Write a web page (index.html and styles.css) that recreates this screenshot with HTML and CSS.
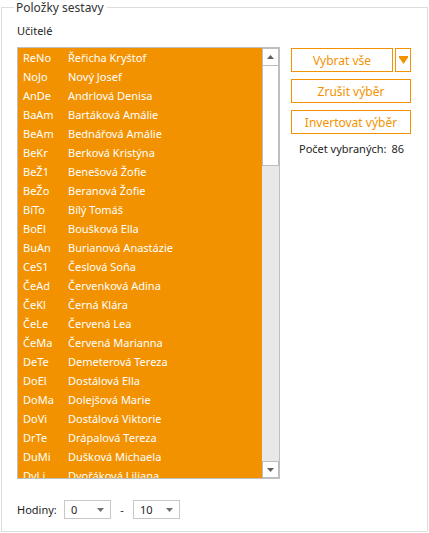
FILE: index.html
```html
<!DOCTYPE html>
<html lang="cs">
<head>
<meta charset="utf-8">
<title>Položky sestavy</title>
<link rel="stylesheet" href="styles.css">
</head>
<body>
<fieldset class="group">
  <legend class="group-title">Položky sestavy</legend>
  <div class="label">Učitelé</div>
  <div class="main">
    <div class="listbox">
      <div class="items">
        <div class="row"><span class="code">ReNo</span><span class="name">Řeřicha Kryštof</span></div>
        <div class="row"><span class="code">NoJo</span><span class="name">Nový Josef</span></div>
        <div class="row"><span class="code">AnDe</span><span class="name">Andrlová Denisa</span></div>
        <div class="row"><span class="code">BaAm</span><span class="name">Bartáková Amálie</span></div>
        <div class="row"><span class="code">BeAm</span><span class="name">Bednářová Amálie</span></div>
        <div class="row"><span class="code">BeKr</span><span class="name">Berková Kristýna</span></div>
        <div class="row"><span class="code">BeŽ1</span><span class="name">Benešová Žofie</span></div>
        <div class="row"><span class="code">BeŽo</span><span class="name">Beranová Žofie</span></div>
        <div class="row"><span class="code">BíTo</span><span class="name">Bílý Tomáš</span></div>
        <div class="row"><span class="code">BoEl</span><span class="name">Boušková Ella</span></div>
        <div class="row"><span class="code">BuAn</span><span class="name">Burianová Anastázie</span></div>
        <div class="row"><span class="code">CeS1</span><span class="name">Česlová Soňa</span></div>
        <div class="row"><span class="code">ČeAd</span><span class="name">Červenková Adina</span></div>
        <div class="row"><span class="code">ČeKl</span><span class="name">Černá Klára</span></div>
        <div class="row"><span class="code">ČeLe</span><span class="name">Červená Lea</span></div>
        <div class="row"><span class="code">ČeMa</span><span class="name">Červená Marianna</span></div>
        <div class="row"><span class="code">DeTe</span><span class="name">Demeterová Tereza</span></div>
        <div class="row"><span class="code">DoEl</span><span class="name">Dostálová Ella</span></div>
        <div class="row"><span class="code">DoMa</span><span class="name">Dolejšová Marie</span></div>
        <div class="row"><span class="code">DoVi</span><span class="name">Dostálová Viktorie</span></div>
        <div class="row"><span class="code">DrTe</span><span class="name">Drápalová Tereza</span></div>
        <div class="row"><span class="code">DuMi</span><span class="name">Dušková Michaela</span></div>
        <div class="row"><span class="code">DvLi</span><span class="name">Dvořáková Liliana</span></div>
      </div>
      <div class="scrollbar">
        <div class="sb-btn"><svg width="7" height="4" viewBox="0 0 7 4"><polygon points="3.5,0 7,4 0,4" fill="#606060"/></svg></div>
        <div class="sb-thumb"></div>
        <div class="sb-track"></div>
        <div class="sb-btn"><svg width="7" height="4" viewBox="0 0 7 4"><polygon points="0,0 7,0 3.5,4" fill="#606060"/></svg></div>
      </div>
    </div>
    <div class="actions">
      <div class="split">
        <button class="btn btn-wide">Vybrat vše</button>
        <button class="btn btn-drop"><svg width="9" height="8" viewBox="0 0 9 8"><polygon points="0,0 9,0 9,1.5 4.5,8 0,1.5" fill="#f39200"/></svg></button>
      </div>
      <button class="btn">Zrušit výběr</button>
      <button class="btn">Invertovat výběr</button>
      <div class="count"><span>Počet vybraných:</span><span class="count-num">86</span></div>
    </div>
  </div>
  <div class="hours">
    <span class="hours-label">Hodiny:</span>
    <div class="select"><span>0</span><svg width="7" height="4" viewBox="0 0 7 4"><polygon points="0,0 7,0 3.5,4" fill="#707070"/></svg></div>
    <span class="dash">-</span>
    <div class="select"><span>10</span><svg width="7" height="4" viewBox="0 0 7 4"><polygon points="0,0 7,0 3.5,4" fill="#707070"/></svg></div>
  </div>
</fieldset>
</body>
</html>
```
FILE: styles.css
```css
* { box-sizing: border-box; }
html, body { margin: 0; padding: 0; background: #fff; }
body {
  font-family: "Noto Sans", "Open Sans", sans-serif;
  font-size: 11px;
  color: #1e1e1e;
  width: 429px;
  height: 533px;
  overflow: hidden;
}
.group {
  margin: 0 1px 1px 1px;
  height: 532px;
  border: 1px solid #dcdcdc;
  padding: 0 15px 0 15px;
  min-width: 0;
}
.group-title {
  margin-left: -3px;
  padding: 0 3px 0 2px;
  font-size: 12px;
  line-height: 15px;
  color: #333;
}
.label {
  margin-top: 8px;
  line-height: 15px;
  height: 15px;
}
.main {
  margin-top: 9px;
  display: flex;
  gap: 11px;
}
.listbox {
  width: 263px;
  height: 432px;
  border: 1px solid #bfbfbf;
  display: flex;
}
.items {
  flex: 1;
  background: #f39200;
  overflow: hidden;
  color: #fff;
}
.row {
  height: 19px;
  line-height: 19px;
  display: flex;
  padding-left: 5px;
  white-space: nowrap;
}
.code { width: 45px; }
.scrollbar {
  width: 17px;
  display: flex;
  flex-direction: column;
  background: #e8e8e8;
}
.sb-btn {
  height: 18px;
  border: 1px solid #bdbdbd;
  background: #fff;
  display: flex;
  align-items: center;
  justify-content: center;
}
.sb-btn:last-child { height: 17px; }
.sb-thumb {
  height: 101px;
  margin-top: -1px;
  border: 1px solid #bdbdbd;
  background: #fff;
}
.sb-track { flex: 1; }
.actions {
  width: 120px;
  display: flex;
  flex-direction: column;
  gap: 7px;
  padding-top: 1px;
}
.split { display: flex; gap: 2px; }
.btn {
  height: 24px;
  border: 1px solid #f39200;
  background: #fff;
  color: #f39200;
  font-family: inherit;
  font-size: 12px;
  padding: 0;
  display: flex;
  align-items: center;
  justify-content: center;
}
.btn-wide { flex: 1; }
.btn-drop { width: 16px; }
.count {
  padding-left: 8px;
  display: flex;
  gap: 5px;
  line-height: 16px;
}
.hours {
  margin-top: 21px;
  display: flex;
  align-items: center;
  height: 19px;
}
.hours-label { width: 47px; }
.select {
  width: 47px;
  height: 19px;
  border: 1px solid #c8c8c8;
  display: flex;
  align-items: center;
  justify-content: space-between;
  padding: 0 6px 0 6px;
}
.dash { width: 22px; text-align: center; }
```
